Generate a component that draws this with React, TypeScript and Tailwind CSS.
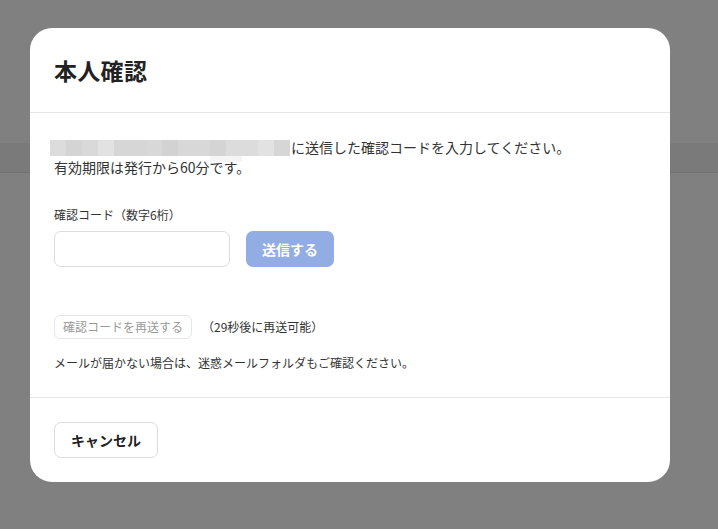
import React from 'react';

const maskShades = [
  '#dcdcdc', '#d4d4d4', '#d9d9d9', '#e2e2e2', '#d6d6d6',
  '#d6d6d6', '#d8d8d8', '#d2d2d2', '#d8d8d8', '#d8d8d8',
  '#d4d4d4', '#dcdcdc', '#dcdcdc', '#e2e2e2', '#d6d6d6',
];

const MaskedEmail: React.FC = () => (
  <span className="relative inline-flex h-4 align-[-3px]">
    {maskShades.map((c, i) => (
      <span key={i} className="block h-4 w-4" style={{ backgroundColor: c }} />
    ))}
    <span className="absolute left-[160px] top-4 h-[6px] w-8 bg-[#f5f5f5]" />
  </span>
);

export default function App() {
  return (
    <div
      className="relative h-[529px] w-[718px] overflow-hidden bg-[#808080]"
      style={{ fontFamily: '"Noto Sans CJK JP", "Noto Sans", sans-serif' }}
    >
      {/* backdrop page header band */}
      <div className="mt-[143px] h-[30px] border-b border-[#707070] bg-[#7a7a7a]" />

      {/* Modal */}
      <div className="absolute left-[30px] top-[28px] flex w-[640px] flex-col rounded-[22px] bg-white text-[#333]">
        <div className="flex h-[85px] items-center border-b border-[#e6e6e6] px-6">
          <h2 className="text-[23px] font-bold tracking-[0.3px] text-[#222]">本人確認</h2>
        </div>

        <div className="px-6 pb-[26px] pt-6">
          <p className="text-[14px] leading-[20px]">
            <span className="-ml-1 mr-px">
              <MaskedEmail />
            </span>
            に送信した確認コードを入力してください。
            <br />
            有効期限は発行から60分です。
          </p>

          <label className="mt-[30px] block text-[12px] leading-4">確認コード（数字6桁）</label>
          <div className="mt-2 flex gap-4">
            <input
              className="h-9 w-[176px] rounded-[7px] border border-[#dcdcdc] px-3 text-[14px] outline-none"
              type="text"
            />
            <button className="h-9 w-[88px] rounded-[7px] bg-[#92ade4] text-[14px] font-bold text-white">
              送信する
            </button>
          </div>

          <div className="mt-12 flex items-center gap-[10px]">
            <button className="h-6 w-[138px] rounded-[6px] border border-[#e6e6e6] text-[12px] text-[#999]">
              確認コードを再送する
            </button>
            <span className="text-[12px]">（29秒後に再送可能）</span>
          </div>

          <p className="mt-4 text-[12px] leading-4">メールが届かない場合は、迷惑メールフォルダもご確認ください。</p>
        </div>

        <div className="border-t border-[#e6e6e6] px-6 py-6">
          <button className="h-9 w-[104px] rounded-[7px] border border-[#dcdcdc] text-[14px] font-bold text-[#222]">
            キャンセル
          </button>
        </div>
      </div>
    </div>
  );
}
